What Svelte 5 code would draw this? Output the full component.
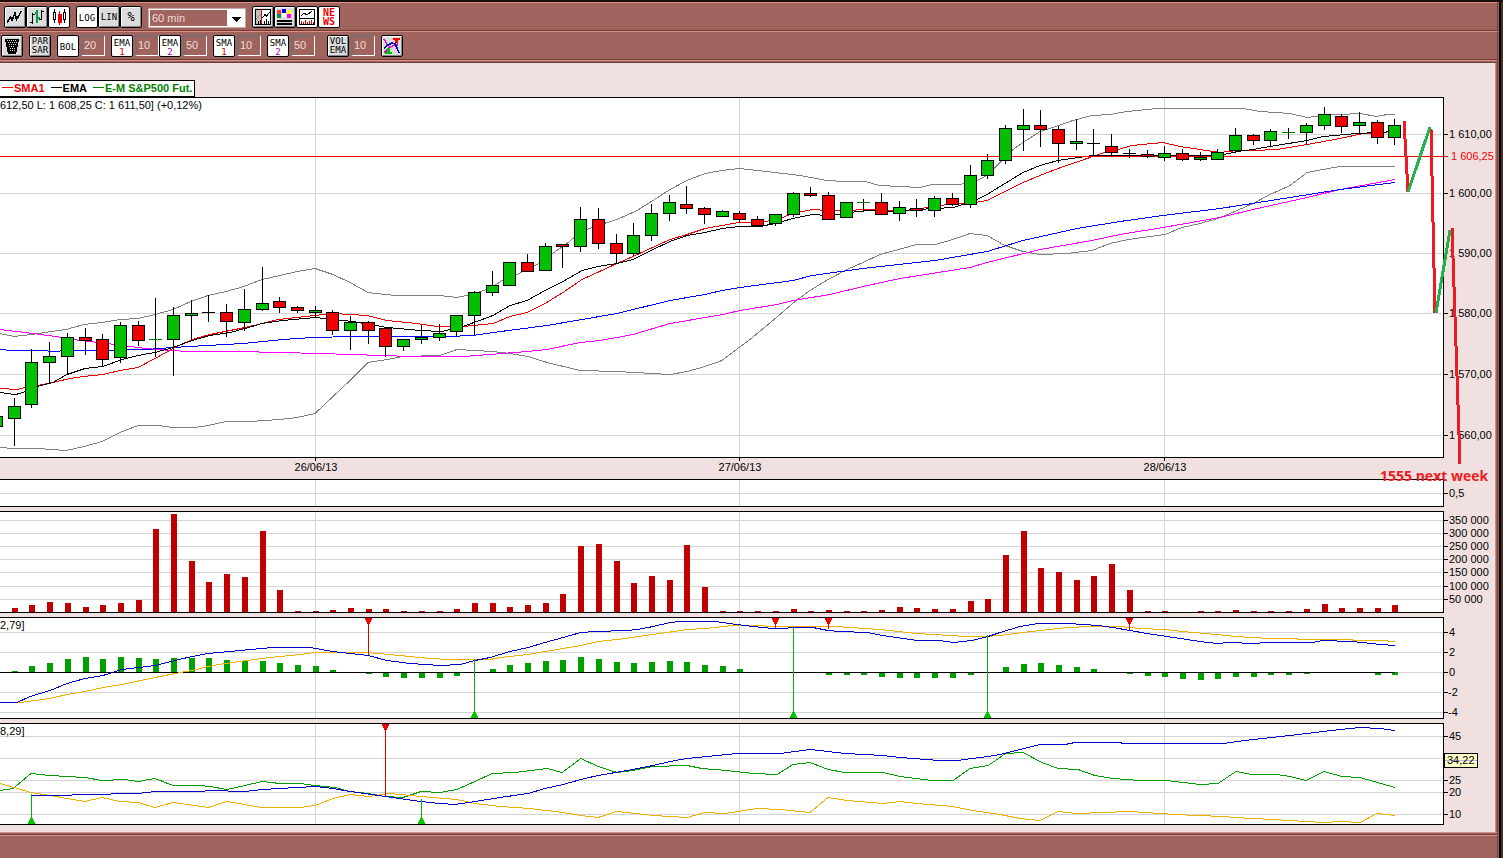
<script>
  let period = "60 min";
  let scale = "LOG";
  let bol = "20";
  let ema1 = "10";
  let ema2 = "50";
  let sma1 = "10";
  let sma2 = "50";
  let volEma = "10";

  const plotWidth = 1444;
  const barX = (i) => Math.floor(14.25 + 17.7 * i);

  const days = [
    { x: 315, label: "26/06/13" },
    { x: 739, label: "27/06/13" },
    { x: 1164, label: "28/06/13" },
  ];

  // kind (g up, r down, d dash, k flat), high, body top, body bottom, low
  const candles = [
    ["g", 416, 416, 426, 426],
    ["g", 398, 406, 418, 445], ["g", 349, 362, 404, 407], ["g", 342, 356, 362, 383],
    ["g", 333, 337, 356, 374], ["r", 328, 337, 340, 354], ["r", 334, 339, 359, 366],
    ["g", 322, 325, 357, 362], ["r", 321, 325, 340, 345], ["d", 298, 339, 339, 356],
    ["g", 307, 315, 339, 375], ["g", 300, 313, 315, 340], ["k", 295, 312, 313, 321],
    ["r", 304, 312, 321, 336], ["g", 289, 309, 322, 330], ["g", 267, 303, 309, 310],
    ["r", 297, 301, 307, 312], ["r", 306, 307, 310, 312], ["g", 306, 310, 312, 316],
    ["r", 310, 312, 330, 334], ["g", 316, 322, 330, 349], ["r", 321, 322, 330, 343],
    ["r", 328, 328, 346, 356], ["g", 339, 339, 346, 350], ["g", 325, 337, 339, 343],
    ["g", 324, 333, 337, 340], ["g", 315, 315, 331, 335], ["g", 291, 292, 315, 334],
    ["g", 271, 285, 292, 295], ["g", 262, 262, 285, 285], ["r", 254, 262, 271, 271],
    ["g", 243, 246, 270, 270], ["r", 244, 244, 246, 267], ["g", 207, 219, 246, 251],
    ["r", 208, 219, 243, 248], ["r", 234, 243, 253, 263], ["g", 223, 235, 253, 255],
    ["g", 204, 213, 235, 240], ["g", 195, 202, 213, 220], ["r", 186, 204, 208, 213],
    ["r", 207, 208, 214, 223], ["g", 210, 211, 216, 216], ["r", 211, 213, 219, 222],
    ["r", 216, 219, 225, 226], ["g", 214, 214, 223, 225], ["g", 192, 193, 214, 216],
    ["r", 187, 193, 195, 196], ["r", 192, 195, 219, 219], ["g", 202, 202, 217, 217],
    ["d", 199, 202, 202, 211], ["r", 193, 202, 214, 214], ["g", 201, 207, 213, 220],
    ["r", 199, 208, 210, 216], ["g", 196, 198, 210, 216], ["r", 193, 198, 204, 205],
    ["g", 165, 175, 204, 207], ["g", 154, 160, 175, 178], ["g", 125, 128, 160, 163],
    ["g", 109, 125, 129, 150], ["r", 110, 125, 129, 146], ["r", 126, 129, 143, 162],
    ["g", 119, 141, 143, 149], ["k", 129, 143, 144, 154], ["r", 134, 146, 152, 156],
    ["k", 149, 153, 154, 157], ["r", 150, 154, 156, 157], ["g", 146, 153, 157, 160],
    ["r", 149, 153, 159, 160], ["g", 152, 157, 159, 160], ["g", 149, 152, 159, 159],
    ["g", 128, 135, 150, 152], ["r", 134, 135, 140, 144], ["g", 129, 131, 140, 146],
    ["d", 128, 132, 132, 138], ["g", 123, 125, 132, 144], ["g", 107, 114, 125, 129],
    ["r", 114, 116, 126, 132], ["g", 112, 122, 125, 132], ["r", 120, 122, 137, 143],
    ["g", 119, 125, 137, 144],
  ].map(([kind, high, top, bottom, low], i) => ({ kind, high, top, bottom, low, x: barX(i - 1) }));

  const bands = [
    "0,333 14,336 32,334 45,332 66,329 84,324 102,322 120,319 138,318 155,314 173,309 191,301 208,295 226,291 244,286 262,279 280,275 297,271 315,268 333,274 350,282 368,292 385,294 397,295 440,295 457,297 475,293 492,287 502,280 517,274 537,264 554,252 567,243 574,237 587,229 607,222 617,219 637,210 653,200 670,189 687,180 705,173 722,170 739,168 775,172 800,175 827,180 845,181 865,181 880,185 900,186 920,187 932,184 960,184 977,180 987,175 1000,162 1013,149 1023,142 1040,131 1050,128 1073,120 1092,115 1110,114 1127,111 1157,108 1243,108 1260,111 1290,113 1307,117 1323,115 1340,114 1360,113 1377,116 1387,114 1395,114",
    "0,447 14,448 38,448 66,450 84,446 102,441 120,432 138,425 158,425 173,427 195,427 208,425 226,421 250,421 280,419 297,417 315,413 333,396 350,380 368,362 387,359 403,356 440,355 457,349 493,351 510,353 528,356 547,362 580,370 617,371 670,374 687,371 705,366 722,360 739,347 750,339 774,319 795,301 810,290 828,279 847,269 863,262 880,254 917,244 935,244 953,239 970,233 987,235 1005,245 1023,251 1040,254 1067,253 1092,250 1110,243 1128,239 1165,234 1182,227 1200,223 1218,218 1237,210 1253,203 1270,194 1290,185 1307,172 1323,169 1340,166 1395,166",
  ];
  const longSma =
    "0,329 33,333 63,337 73,339 90,341 123,345 137,347 157,349 173,350 187,351 233,351 283,352 317,353 353,354 380,355 413,356 463,356 490,354 527,351 547,349 580,342 600,340 617,337 633,334 670,323 723,314 740,310 777,304 793,300 830,294 863,286 900,278 970,267 987,262 1040,249 1092,240 1120,234 1163,227 1220,217 1253,209 1307,197 1340,189 1395,179";
  const longEma =
    "0,349 12,350 40,350 55,351 66,350 107,350 123,349 147,349 173,347 207,345 243,343 283,339 313,337 353,336 447,336 473,335 493,332 547,325 617,313 670,300 705,294 722,290 740,287 793,280 812,275 863,268 935,260 987,251 1023,240 1077,228 1120,221 1163,215 1220,208 1290,197 1340,189 1395,182";
  const shortSma =
    "0,388 17,389 25,387 37,385 53,382 70,378 83,376 103,374 120,370 138,367 155,358 173,348 192,339 210,334 230,330 245,327 262,323 278,319 297,317 315,315 333,313 367,315 387,320 417,323 437,326 463,326 493,323 510,316 527,312 545,303 563,292 582,279 617,263 633,256 670,239 687,234 705,228 722,225 739,222 760,222 777,219 793,213 812,209 827,210 850,210 863,209 907,210 927,207 947,204 970,203 987,200 1005,191 1023,182 1040,175 1058,168 1090,157 1107,151 1118,149 1132,145 1163,142 1180,146 1200,149 1220,152 1237,150 1253,150 1277,149 1307,144 1340,138 1363,133 1395,131";
  const shortEma =
    "0,392 15,394 20,393 37,386 53,382 67,374 85,368 103,366 122,359 138,355 155,352 173,347 192,340 210,335 230,332 245,328 262,323 283,320 315,317 353,321 387,327 420,330 442,331 463,326 493,315 510,305 527,300 545,290 563,281 582,270 598,266 617,263 633,259 653,249 670,241 687,235 705,232 722,228 739,226 760,226 775,223 793,218 812,214 827,215 840,214 850,212 867,210 887,211 917,209 953,207 973,201 987,194 1005,183 1023,172 1040,165 1058,160 1092,155 1220,155 1237,151 1253,149 1270,146 1307,140 1323,136 1357,133 1377,132 1395,131";

  const volume = [
    608, 605, 602, 603, 607, 605, 603, 600, 529, 514, 561, 582, 574, 577, 531, 590, 611, 611, 610, 608,
    609, 609, 611, 611, 611, 609, 603, 603, 607, 605, 603, 594, 546, 544, 561, 583, 576, 580, 545, 587,
    611, 611, 611, 611, 609, 611, 610, 611, 611, 610, 607, 608, 609, 609, 601, 599, 555, 531, 568, 572,
    580, 576, 564, 590, 611, 611, 612, 611, 611, 610, 611, 611, 611, 609, 604, 608, 608, 608, 605,
  ];

  // distance from the zero line, positive is up
  const histogram = [
    1, 6, 9, 13, 15, 13, 15, 14, 13, 14, 14, 14, 12, 11, 11, 9, 7, 6, 2, 0,
    -2, -5, -6, -6, -6, -4, 0, 3, 7, 9, 11, 12, 15, 13, 10, 9, 10, 11, 10, 7,
    6, 3, 0, 0, 0, 0, -3, -3, -3, -5, -6, -6, -6, -6, -3, 0, 5, 8, 9, 7,
    5, 3, 0, -2, -4, -5, -7, -8, -7, -5, -5, -3, -3, -2, 0, 0, 0, -3, -3,
  ];
  const macdLine =
    "0,702 17,702 30,696 50,690 67,683 85,678 103,675 122,669 155,665 175,660 192,656 208,653 240,650 273,647 310,647 333,651 368,655 387,660 410,663 440,665 460,664 475,660 490,657 510,651 528,647 545,642 563,637 581,632 595,631 627,630 638,629 653,626 670,622 680,621 715,621 737,624 753,626 773,628 783,628 793,627 813,627 828,630 840,631 867,632 883,635 917,640 940,640 953,642 972,640 988,636 1000,632 1020,626 1038,623 1068,623 1098,625 1113,627 1130,630 1147,633 1167,636 1200,641 1217,643 1230,642 1253,643 1267,642 1312,642 1323,640 1350,641 1363,642 1380,644 1395,645";
  const macdSignal =
    "0,702 20,702 50,698 67,694 85,691 103,687 122,684 155,677 175,673 192,670 208,666 225,663 262,658 280,656 300,654 315,652 368,652 410,656 430,658 450,659 490,659 500,657 528,654 545,651 581,645 598,641 617,639 653,634 687,629 705,628 733,625 760,625 770,626 835,626 880,629 917,633 950,635 965,636 985,636 1000,635 1023,632 1040,630 1068,627 1090,626 1120,626 1140,628 1165,629 1182,631 1217,634 1235,636 1270,638 1295,638 1300,639 1350,639 1355,640 1380,640 1395,641";
  const plusDi =
    "0,790 13,788 31,773 50,775 85,777 102,780 125,779 138,781 155,778 173,785 200,785 210,786 227,789 245,785 262,781 280,783 300,783 315,785 335,787 350,791 368,793 385,796 403,797 421,791 440,792 457,789 475,781 492,773 515,772 547,768 562,772 581,758 598,766 617,772 633,770 652,766 687,765 702,768 727,770 753,773 777,774 793,764 810,762 828,769 845,772 883,772 900,776 932,780 953,780 970,768 988,765 1000,757 1005,753 1023,752 1042,762 1058,768 1078,769 1095,775 1113,778 1140,780 1167,780 1200,784 1218,783 1236,771 1252,774 1277,774 1290,776 1306,780 1324,771 1342,776 1360,777 1395,787";
  const minusDi =
    "0,783 14,787 31,792 50,795 67,798 85,801 102,797 120,801 138,802 155,807 173,802 208,807 227,801 262,807 300,807 315,805 333,798 350,794 368,796 390,793 421,796 457,799 475,803 500,806 530,808 563,812 581,815 598,817 617,811 653,815 687,817 705,812 725,813 757,808 780,809 810,812 828,797 847,800 883,803 900,801 917,803 953,806 972,810 1000,814 1020,818 1040,820 1058,811 1077,813 1130,811 1175,814 1223,816 1235,817 1290,820 1323,822 1342,821 1360,822 1377,813 1395,815";
  const adxLine =
    "31,795 60,795 85,794 138,793 155,791 200,791 210,790 245,791 262,789 315,786 333,788 350,791 385,796 421,801 440,803 455,804 475,801 500,797 528,793 545,788 563,784 581,779 598,775 633,769 653,765 670,761 687,758 737,753 780,753 810,749 828,751 845,753 883,755 900,757 940,760 957,760 972,758 988,756 1000,754 1020,749 1040,744 1065,744 1075,742 1120,742 1123,743 1223,743 1245,740 1290,735 1323,731 1340,729 1360,727 1380,728 1395,730";

  const macdSells = [[368, 655], [775, 628], [828, 629], [1129, 630]];
  const macdBuys = [[474, 659], [793, 626], [987, 635]];
  const adxSells = [[385, 796]];
  const adxBuys = [[31, 794], [421, 799]];

  const priceTicks = [[134, "1 610,00"], [193, "1 600,00"], [253, "1 590,00"], [313, "1 580,00"], [374, "1 570,00"], [435, "1 560,00"]];
  const emptyTicks = [[493, "0,5"]];
  const volumeTicks = [[520, "350 000"], [533, "300 000"], [546, "250 000"], [559, "200 000"], [572, "150 000"], [586, "100 000"], [599, "50 000"]];
  const macdTicks = [[632, "4"], [652, "2"], [672, "0"], [692, "-2"], [712, "-4"]];
  const adxTicks = [[736, "45"], [758, ""], [780, "25"], [792, "20"], [814, "10"]];
</script>

{#snippet grid(top, height, ticks)}
  <rect class="paper" x="-2" y={top} width={plotWidth + 1} {height} />
  {#each ticks as [y]}
    <line class="grid" x1="0" x2={plotWidth - 1} y1={y + 0.5} y2={y + 0.5} />
  {/each}
  {#each days as day}
    <line class="grid" x1={day.x + 0.5} x2={day.x + 0.5} y1={top} y2={top + height} />
  {/each}
{/snippet}

{#snippet frame(top, height)}
  <rect class="frame" x="-2" y={top + 0.5} width={plotWidth + 1.5} height={height - 1} />
{/snippet}

{#snippet curve(points, color)}
  <polyline class="curve" {points} stroke={color} transform="translate(0 0.5)" />
{/snippet}

{#snippet sell(x, top, y)}
  <path d="M{x + 0.5} {top} V{y}" stroke="#e00000" />
  <path d="M{x - 3} {top + 1}h7v2h-1v2h-1v2h-1v1h-1v-1h-1v-2h-1v-2h-1z" fill="#f00000" />
{/snippet}

{#snippet buy(x, bottom, y)}
  <path d="M{x + 0.5} {y} V{bottom}" stroke="#00b400" />
  <path d="M{x - 3} {bottom}h7v-2h-1v-2h-1v-2h-1v-1h-1v1h-1v2h-1v2h-1z" fill="#00c800" />
{/snippet}

{#snippet axis(top, height, ticks)}
  <svg class="axis" {height} viewBox="0 {top} 51 {height}">
    {#each ticks as [y, label]}
      {#if label}
        <line x1="0" x2="4" y1={y + 0.5} y2={y + 0.5} stroke="#000" />
        <text x={label.startsWith("-") ? 4 : 5} y={y + 4}>{label}</text>
      {/if}
    {/each}
    {#if top === 97}
      <line x1="0" x2="4" y1="156.5" y2="156.5" stroke="#f00" />
      <text class="last" x="7" y="160">1 606,25</text>
    {/if}
    {#if top === 723}
      <rect x="0.5" y="753.5" width="33" height="14" fill="#ffffc8" stroke="#000" />
      <line x1="1" x2="33" y1="760.5" y2="760.5" stroke="#b8b8d8" />
      <text x="3" y="764">34,22</text>
    {/if}
  </svg>
{/snippet}

<div class="window">
  <div class="toolbar">
    <div class="group">
      <button aria-label="Line chart">
        <svg viewBox="0 0 20 20"><path d="M2 15.500L5.500 10L7 13.500L10 6L11.500 12.500L16.500 4" fill="none" stroke="#000" stroke-width="1.500" /></svg>
      </button>
      <button aria-label="Bar chart">
        <svg viewBox="0 0 20 20">
          <path d="M5.500 6v11M3 15.500h2M5 7.500h3M14.500 3v10M12 12.500h2M15 4.500h2" stroke="#000" fill="none" />
          <path d="M8 6h2M11 11h2M10 3v13" stroke="#00a040" stroke-width="2" fill="none" />
        </svg>
      </button>
      <button class="on" aria-label="Candlestick chart">
        <svg viewBox="0 0 20 20">
          <path d="M5.500 2v3M5.500 12v4M15.500 2v3M15.500 12v4M4.500 5.500h2v7h-2zM14.500 5.500h2v7h-2z" stroke="#000" fill="none" />
          <path d="M10.500 4v14" stroke="#e00000" /><path d="M9 7h4v9h-4z" fill="#e00000" />
        </svg>
      </button>
    </div>
    <div class="group">
      <button class:on={scale === "LOG"} on:click={() => (scale = "LOG")}>LOG</button>
      <button class:on={scale === "LIN"} on:click={() => (scale = "LIN")}>LIN</button>
      <button class:on={scale === "%"} class="percent" on:click={() => (scale = "%")}>%</button>
    </div>
    <label class="period">
      <select bind:value={period} aria-label="Period">
        <option>5 min</option>
        <option>15 min</option>
        <option>60 min</option>
        <option>Day</option>
      </select>
      <svg viewBox="0 0 17 15"><path d="M4 6h9v1h-1v1h-1v1h-1v1h-1v1h-1v-1h-1v-1h-1v-1h-1v-1h-1z" /></svg>
    </label>
    <div class="group">
      <button aria-label="Volume overlay">
        <svg viewBox="0 0 20 20">
          <path d="M3 3h6v14h-6z" fill="#c0c0c0" />
          <path d="M9 3h8v14h-8z" fill="#fff" />
          <path d="M2.500 2.500h15v15h-15z" fill="none" stroke="#000" />
          <path d="M3 12.500L6 9L8 7" fill="none" stroke="#888" />
          <path d="M9.500 11L12 7.500L13.500 9L17 5M5.500 14v3M7.500 13v4M11.500 14v3M13.500 12v5M15.500 14v3" fill="none" stroke="#000" />
          <path d="M8.500 2v15" stroke="#e00000" />
        </svg>
      </button>
      <button aria-label="Colours">
        <svg viewBox="0 0 20 20">
          <path d="M2 3h4v4h-4z" fill="#f04040" /><path d="M7 2h4v4h-4z" fill="#0000f0" /><path d="M12 3h4v4h-4z" fill="#ff0" />
          <path d="M2 7h4v4h-4z" fill="#009040" /><path d="M7 6h4v4h-4z" fill="#fff" /><path d="M12 7h4v4h-4z" fill="#f0f" />
          <path d="M2 13h15v2h-15zM2 16h15v2h-15z" />
        </svg>
      </button>
      <button class="on" aria-label="Indicators">
        <svg viewBox="0 0 20 20">
          <path d="M2.500 2.500h15v15h-15zM3 11.500h14M4 9L7 6L10 8L15 4" fill="none" stroke="#000" />
          <path d="M4.500 14v3M6.500 15v2M8.500 13v4M10.500 15v2M12.500 14v3M14.500 13v4M16.500 15v2" stroke="#e00000" />
        </svg>
      </button>
      <button class="news"><span>NE<br />WS</span></button>
    </div>
  </div>

  <div class="toolbar second">
    <button aria-label="Clear">
      <svg viewBox="0 0 20 20">
        <path d="M3 3h14v3h-1v5h-1v5h-1v2h-8v-2h-1v-5h-1v-5h-1z" />
        <path d="M5 4.500h10M7 8.500h7M8 12.500h5" stroke="#ddd" stroke-dasharray="1 1" />
        <path d="M6 6.500h9M7 10.500h6M8 14.500h5" stroke="#ddd" stroke-dasharray="1 1" />
      </svg>
    </button>
    <button><span>PAR<br />SAR</span></button>
    <div class="pair"><button class="on">BOL</button><input aria-label="Bollinger period" bind:value={bol} /></div>
    <div class="pair"><button class="on average"><span>EMA<br /><b class="one">1</b></span></button><input aria-label="EMA 1 period" bind:value={ema1} /></div>
    <div class="pair joined"><button class="on average"><span>EMA<br /><b class="two">2</b></span></button><input aria-label="EMA 2 period" bind:value={ema2} /></div>
    <div class="pair"><button class="on average"><span>SMA<br /><b class="one">1</b></span></button><input aria-label="SMA 1 period" bind:value={sma1} /></div>
    <div class="pair"><button class="on average"><span>SMA<br /><b class="two">2</b></span></button><input aria-label="SMA 2 period" bind:value={sma2} /></div>
    <div class="pair apart"><button><span>VOL<br />EMA</span></button><input aria-label="Volume EMA period" bind:value={volEma} /></div>
    <button aria-label="Signals">
      <svg viewBox="0 0 20 20">
        <path d="M2 3L6 10M2 17L8 11L16 8M13 11L15 9" fill="none" stroke="#e000e0" stroke-width="1.500" />
        <path d="M2 12L6 9L10 7L13 8L15 12L17 17" fill="none" stroke="#0000c0" stroke-width="1.500" />
        <path d="M11 2h7v2h-2v3h-3v-3h-2z" fill="#f00" />
        <path d="M3 18h7v-2h-2v-4h-3v4h-2z" fill="#00c000" />
      </svg>
    </button>
  </div>

  <main>
    <div class="legend">
      <span class="sma">SMA1</span>
      <span class="ema">EMA</span>
      <span class="future">E-M S&amp;P500 Fut.</span>
    </div>

    <div class="charts">
      <section class="panel">
        <svg class="plot" height="361">
          <svg viewBox="0 97 {plotWidth} 361" preserveAspectRatio="none" width="100%" height="361">
            {@render grid(97, 361, priceTicks)}
            {#each bands as points}
              {@render curve(points, "#808080")}
            {/each}
            {@render curve(longSma, "#f0f")}
            {@render curve(longEma, "#00f")}
            {@render curve(shortSma, "#f00000")}
            {@render curve(shortEma, "#000")}
            <line x1="0" x2={plotWidth} y1="156.5" y2="156.5" stroke="#f00" />
            {#each candles as c}
              <line x1={c.x + 0.5} x2={c.x + 0.5} y1={c.high} y2={c.low + 1} stroke="#000" />
              {#if c.kind === "d"}
                <line x1={c.x - 6} x2={c.x + 7} y1={c.top + 0.5} y2={c.top + 0.5} stroke="#008000" />
              {:else if c.kind === "k"}
                <rect x={c.x - 6} y={c.top} width="13" height={c.bottom - c.top} />
              {:else}
                <rect
                  x={c.x - 5.5}
                  y={c.top + 0.5}
                  width="12"
                  height={c.bottom - c.top}
                  fill={c.kind === "g" ? "#00c000" : "#f00000"}
                  stroke="#000"
                />
              {/if}
            {/each}
            {@render frame(97, 361)}
          </svg>
          <text x="0" y="12">612,50 L: 1 608,25 C: 1 611,50] (+0,12%)</text>
        </svg>
        {@render axis(97, 361, priceTicks)}
      </section>

      <div class="panel">
        <svg class="plot" height="21">
          <svg viewBox="0 458 {plotWidth} 21" preserveAspectRatio="none" width="100%" height="21">
            {#each days as day}
              <line x1={day.x + 0.5} x2={day.x + 0.5} y1="458" y2="461" stroke="#000" />
            {/each}
          </svg>
          {#each days as day}
            <text x="{((day.x + 1) / plotWidth) * 100}%" y="13" text-anchor="middle">{day.label}</text>
          {/each}
        </svg>
        <svg class="axis" height="21"></svg>
      </div>

      <section class="panel gap">
        <svg class="plot" height="28" viewBox="0 479 {plotWidth} 28" preserveAspectRatio="none">
          {@render grid(479, 28, emptyTicks)}
          {@render frame(479, 28)}
        </svg>
        {@render axis(479, 28, emptyTicks)}
      </section>

      <section class="panel gap">
        <svg class="plot" height="102" viewBox="0 511 {plotWidth} 102" preserveAspectRatio="none">
          {@render grid(511, 102, volumeTicks)}
          {#each volume as y, i}
            <rect x={barX(i) - 2} {y} width="6" height={612 - y} fill="#c00000" />
          {/each}
          {@render frame(511, 102)}
        </svg>
        {@render axis(511, 102, volumeTicks)}
      </section>

      <section class="panel gap">
        <svg class="plot" height="102">
          <svg viewBox="0 617 {plotWidth} 102" preserveAspectRatio="none" width="100%" height="102">
            {@render grid(617, 102, macdTicks)}
            {#each histogram as value, i}
              <rect x={barX(i) - 2} y={value > 0 ? 672 - value : 672} width="6" height={Math.abs(value)} fill="#00a000" />
            {/each}
            <line x1="0" x2="1395" y1="672.5" y2="672.5" stroke="#000" />
            {@render curve(macdSignal, "#f0b000")}
            {@render curve(macdLine, "#0000c8")}
            {#each macdSells as [x, y]}
              {@render sell(x, 617, y)}
            {/each}
            {#each macdBuys as [x, y]}
              {@render buy(x, 718, y)}
            {/each}
            {@render frame(617, 102)}
          </svg>
          <text x="0" y="12">2,79]</text>
        </svg>
        {@render axis(617, 102, macdTicks)}
      </section>

      <section class="panel">
        <svg class="plot" height="102">
          <svg viewBox="0 723 {plotWidth} 102" preserveAspectRatio="none" width="100%" height="102">
            {@render grid(723, 102, adxTicks)}
            {@render curve(plusDi, "#00a000")}
            {@render curve(minusDi, "#f0b000")}
            {@render curve(adxLine, "#0000c8")}
            {#each adxSells as [x, y]}
              {@render sell(x, 723, y)}
            {/each}
            {#each adxBuys as [x, y]}
              {@render buy(x, 824, y)}
            {/each}
            {@render frame(723, 102)}
          </svg>
          <text x="0" y="12">8,29]</text>
        </svg>
        {@render axis(723, 102, adxTicks)}
      </section>

      <svg class="forecast" width="120" height="400" viewBox="1375 97 120 400">
        <g fill="none" stroke-width="3">
          <path d="M1404 121L1408 192M1431 129L1435 313M1452 228L1460 464" stroke="#ed1c24" />
          <path d="M1408 192L1430 127M1436 313L1450 230" stroke="#22b14c" />
        </g>
        <text x="1380" y="481">1555 next week</text>
      </svg>
    </div>
  </main>

  <footer></footer>
</div>

<style>
  :global(body) {
    margin: 0;
  }
  .window {
    display: flex;
    flex-direction: column;
    box-sizing: border-box;
    min-height: 100vh;
    padding-right: 5px;
    border-top: 2px solid #1a0e0c;
    background: #a0645e;
    box-shadow: inset -2px 0 #4a2c28, inset -4px 0 #000, inset -5px 0 #a0645e;
    font-family: "Liberation Sans", Arial, sans-serif;
    font-size: 11px;
    overflow: hidden;
  }
  .toolbar {
    display: flex;
    gap: 6px;
    padding: 3px 4px 2px;
    border-top: 1px solid #e08c80;
    border-right: 1px solid #6c403c;
    border-bottom: 1px solid #6c403c;
  }
  .second {
    padding-left: 1px;
  }
  .group,
  .pair {
    display: flex;
  }
  .pair {
    gap: 2px;
  }
  .joined {
    margin-left: -6px;
  }
  .apart {
    margin-left: 6px;
  }
  button {
    display: flex;
    align-items: center;
    justify-content: center;
    width: 22px;
    height: 22px;
    padding: 0;
    border: 1px solid #000;
    border-radius: 2px;
    background: #dcdcdc;
    box-shadow: inset 1px 1px #fff, inset -1px -1px #888;
    color: #000;
    font: 9px/9px "DejaVu Sans Mono", monospace;
    text-align: center;
    cursor: pointer;
  }
  button.on {
    padding-top: 2px;
    background: #fff;
    box-shadow: none;
  }
  button.on svg {
    margin-top: -2px;
  }
  button.average {
    padding-top: 3px;
  }
  button svg {
    flex: none;
    width: 20px;
    height: 20px;
  }
  .percent {
    font-size: 12px;
  }
  button.news {
    background: #fff;
    box-shadow: none;
    color: #f00000;
    font-size: 10px;
    font-weight: bold;
  }
  b {
    font-weight: normal;
  }
  .one {
    color: #d00000;
  }
  .two {
    color: #b000b0;
  }
  .period {
    position: relative;
    width: 98px;
    height: 20px;
    margin-top: 2px;
  }
  select {
    width: 100%;
    height: 100%;
    padding: 0 2px;
    border: 2px solid #fff;
    border-right-width: 19px;
    border-radius: 0;
    outline: 1px solid #c8a8a4;
    outline-offset: -1px;
    background: #a0645e;
    color: #f0dcd8;
    font: 11px "Liberation Sans", Arial, sans-serif;
    appearance: none;
  }
  .period svg {
    position: absolute;
    top: 3px;
    right: 1px;
    width: 17px;
    height: 15px;
    pointer-events: none;
  }
  input {
    box-sizing: border-box;
    width: 24px;
    height: 21px;
    padding: 0 0 2px 1px;
    border: 2px solid;
    border-color: #7c6c6c #fff #fff #7c6c6c;
    border-right-width: 1px;
    border-bottom-width: 1px;
    background: #a0645e;
    color: #f0dcd8;
    font: 11px "Liberation Sans", Arial, sans-serif;
  }
  main {
    padding: 20px 2px 10px 0;
    background: #f0e0e0;
    box-shadow:
      inset 0 1px #e08c80, inset 0 2px #a0645e, inset 0 3px #6c403c,
      inset 0 -1px #6c403c, inset 0 -2px #a0645e, inset 0 -3px #d08c84,
      inset -1px 0 #a0645e, inset -2px 0 #d08c84;
    border-right: 1px solid #6c403c;
  }
  .legend {
    display: flex;
    gap: 6px;
    box-sizing: border-box;
    width: max-content;
    height: 17px;
    padding: 0 2px;
    border: 1px solid #000;
    border-width: 1px 1px 1px 0;
    background: #fff;
    font-weight: bold;
    line-height: 15px;
  }
  .legend span::before {
    content: "";
    display: inline-block;
    width: 11px;
    height: 1px;
    margin-right: 1px;
    background: currentColor;
    vertical-align: 4px;
  }
  .sma {
    color: #f00000;
  }
  .future {
    color: #008000;
  }
  .charts {
    position: relative;
  }
  .panel {
    display: flex;
  }
  .gap {
    margin-bottom: 4px;
  }
  .plot {
    flex: 1;
    min-width: 0;
  }
  .axis {
    flex: none;
    width: 51px;
    overflow: visible;
  }
  svg {
    display: block;
    shape-rendering: crispEdges;
  }
  .paper {
    fill: #fff;
  }
  .grid {
    stroke: #d4d4d4;
  }
  .frame {
    fill: none;
    stroke: #000;
  }
  .curve {
    fill: none;
  }
  .plot line,
  .plot rect,
  .plot path,
  .plot polyline {
    vector-effect: non-scaling-stroke;
  }
  .last {
    fill: #f00000;
  }
  .forecast {
    position: absolute;
    top: 0;
    right: 0;
  }
  .forecast text {
    fill: #ed1c24;
    font: bold 14px "Open Sans", sans-serif;
  }
  footer {
    flex: 1;
    min-height: 22px;
    border-top: 1px solid #e08c80;
    border-right: 1px solid #6c403c;
    border-bottom: 1px solid #6c403c;
  }
</style>
